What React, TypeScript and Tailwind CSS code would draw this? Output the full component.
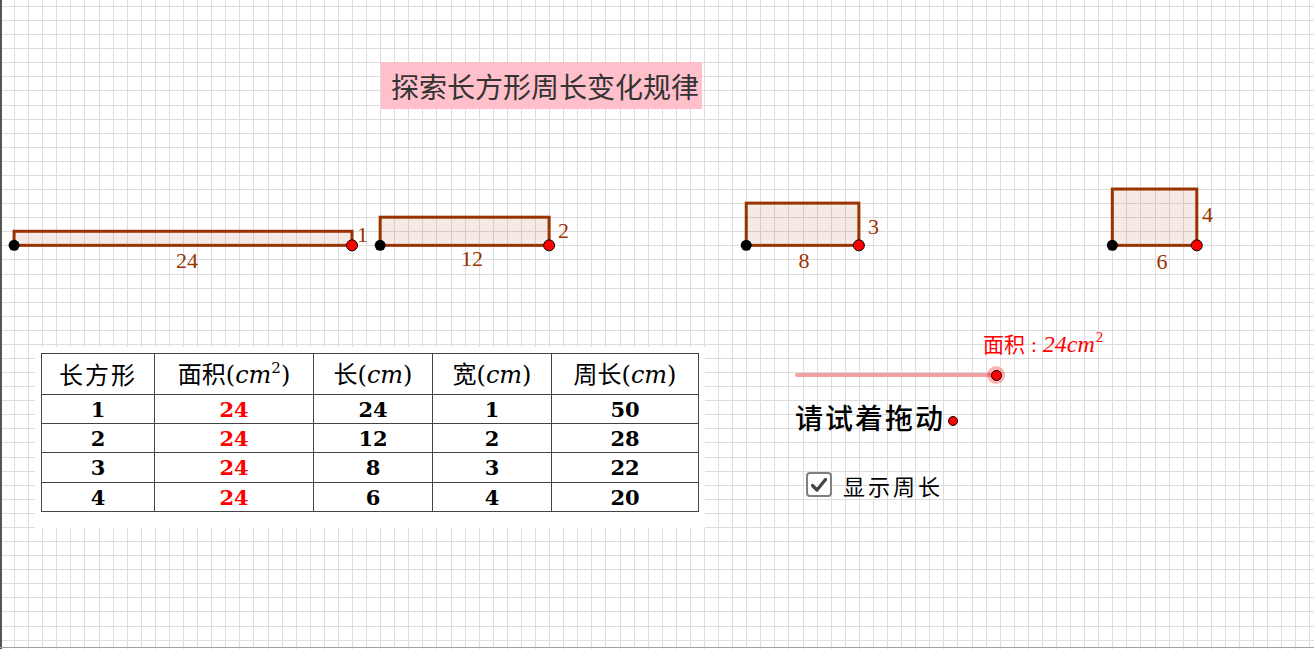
import React from 'react';

// GeoGebra-style canvas: 1 unit = 14.08px, grid origin offset 6px vertically
const U = 14.08;
const gx = (u: number) => u * U;
const gy = (v: number) => 6 + v * U;

const BROWN = '#993300';

const rects = [
  { u: 1, w: 24, h: 1 },
  { u: 27, w: 12, h: 2 },
  { u: 53, w: 8, h: 3 },
  { u: 79, w: 6, h: 4 },
];

const labels = [
  { t: '24', x: 187, y: 268, a: 'middle' },
  { t: '1', x: 357, y: 242, a: 'start' },
  { t: '12', x: 472, y: 266, a: 'middle' },
  { t: '2', x: 558, y: 238, a: 'start' },
  { t: '8', x: 804, y: 268, a: 'middle' },
  { t: '3', x: 868, y: 234, a: 'start' },
  { t: '6', x: 1162, y: 269, a: 'middle' },
  { t: '4', x: 1202, y: 222, a: 'start' },
];

const rows = [
  ['1', '24', '24', '1', '50'],
  ['2', '24', '12', '2', '28'],
  ['3', '24', '8', '3', '22'],
  ['4', '24', '6', '4', '20'],
];

const cjk = { fontFamily: '"Noto Sans CJK SC", "Noto Sans", sans-serif' };
const serif = { fontFamily: '"DejaVu Serif", "Liberation Serif", serif' };
const times = { fontFamily: '"Liberation Serif", serif' };

function Cm({ sup }: { sup?: boolean }) {
  return (
    <span style={serif}>
      (<i>cm</i>
      {sup && <sup className="text-[15px] -top-[10px]">2</sup>})
    </span>
  );
}

function Canvas() {
  const vLines = Array.from({ length: 94 }, (_, k) => Math.round(gx(k)) + 0.5);
  const hLines = Array.from({ length: 46 }, (_, k) => Math.round(gy(k)) + 0.5);
  return (
    <svg className="absolute inset-0" width={1314} height={649}>
      {vLines.map((x, i) => (
        <line key={'v' + i} x1={x} y1={0} x2={x} y2={649} stroke="#dddddd" strokeWidth={1} />
      ))}
      {hLines.map((y, i) => (
        <line key={'h' + i} x1={0} y1={y} x2={1314} y2={y} stroke="#dddddd" strokeWidth={1} />
      ))}

      {rects.map((r, i) => {
        const x = gx(r.u);
        const y0 = gy(17);
        const w = gx(r.w);
        const h = r.h * U;
        return (
          <g key={i}>
            <rect x={x} y={y0 - h} width={w} height={h} fill="rgba(153,51,0,0.1)" stroke={BROWN} strokeWidth={3} />
            <circle cx={x} cy={y0} r={5.5} fill="#000" />
            <circle cx={x + w} cy={y0} r={5.5} fill="#ff0000" stroke="#000" strokeWidth={1} />
          </g>
        );
      })}

      {labels.map((l, i) => (
        <text
          key={i}
          x={l.x}
          y={l.y}
          textAnchor={l.a as 'middle' | 'start'}
          fill={BROWN}
          fontSize={22}
          fontFamily='"Liberation Serif", serif'
        >
          {l.t}
        </text>
      ))}

      <circle cx={0.5} cy={30} r={1.5} fill="#2e8b57" />
    </svg>
  );
}

function ControlPanel() {
  return (
    <div className="absolute left-[795px] top-[330px] flex flex-col">
      {/* slider caption */}
      <div className="h-[26px] pl-[188px] text-[#ff0000] whitespace-nowrap leading-[26px]">
        <span className="text-[21px]" style={cjk}>面积</span>
        <span className="text-[21px] mx-[6px]" style={times}>:</span>
        <span className="italic text-[24px]" style={times}>24cm</span>
        <sup className="text-[15px] -top-[10px] ml-[1px]" style={times}>2</sup>
      </div>

      {/* slider */}
      <div className="relative mt-[17px] w-[201px] h-[4px] rounded-full bg-[#f4a0a0]">
        <div className="absolute right-[-9px] top-[-7px] w-[18px] h-[18px] rounded-full bg-[rgba(255,0,0,0.3)] flex items-center justify-center">
          <div className="w-[11px] h-[11px] rounded-full bg-[#ff0000] border border-black" />
        </div>
      </div>

      {/* drag hint */}
      <div className="mt-[26px] flex items-center gap-[3px]">
        <span className="text-[28px] leading-none text-black font-medium tracking-[2px] whitespace-nowrap" style={cjk}>
          请试着拖动
        </span>
        <span className="mt-[7px] w-[10px] h-[10px] rounded-full bg-[#ff0000] border border-black" />
      </div>

      {/* checkbox */}
      <div className="mt-[41px] pl-[11px] flex items-center gap-[11px]">
        <div className="w-[26px] h-[25px] rounded-[4px] border-2 border-[#808080] bg-white flex items-center justify-center">
          <svg width="18" height="16" viewBox="0 0 18 16">
            <path d="M2.5 8.5 L7 13 L15.5 2.5" fill="none" stroke="#444" strokeWidth={3.2} strokeLinecap="round" strokeLinejoin="round" />
          </svg>
        </div>
        <span className="text-[22px] leading-none text-black tracking-[3px]" style={cjk}>
          显示周长
        </span>
      </div>
    </div>
  );
}

export default function App() {
  return (
    <div className="relative w-[1314px] h-[649px] overflow-hidden bg-white">
      <Canvas />

      <div className="absolute inset-y-0 left-0 w-[2px] bg-[#555]" />
      <div className="absolute left-0 right-0 bottom-[1px] h-[1px] bg-[#a0a0a0]" />

      {/* title */}
      <div
        className="absolute left-[381px] top-[62px] w-[321px] h-[47px] bg-[#ffc0cb] pl-[10px] flex items-center text-[28px] text-[#333] leading-none"
        style={cjk}
      >
        探索长方形周长变化规律
      </div>

      {/* table */}
      <div className="absolute left-[35px] top-[347px] w-[670px] h-[181px] bg-white p-[6px]">
        <table className="border-collapse border border-[#444] text-black">
          <colgroup>
            <col className="w-[113px]" />
            <col className="w-[159px]" />
            <col className="w-[119px]" />
            <col className="w-[119px]" />
            <col className="w-[147px]" />
          </colgroup>
          <thead>
            <tr className="h-[41px] text-[24px] leading-none">
              <th className="border border-[#444] font-normal tracking-[2px]" style={cjk}>长方形</th>
              <th className="border border-[#444] font-normal" style={cjk}>面积<Cm sup /></th>
              <th className="border border-[#444] font-normal" style={cjk}>长<Cm /></th>
              <th className="border border-[#444] font-normal" style={cjk}>宽<Cm /></th>
              <th className="border border-[#444] font-normal" style={cjk}>周长<Cm /></th>
            </tr>
          </thead>
          <tbody>
            {rows.map((r, i) => (
              <tr key={i} className={i === 2 ? 'h-[30px]' : 'h-[29px]'}>
                {r.map((c, j) => (
                  <td
                    key={j}
                    className={
                      'border border-[#444] text-center font-bold text-[21px] leading-none ' +
                      (j === 1 ? 'text-[#ff0000]' : 'text-black')
                    }
                    style={serif}
                  >
                    {c}
                  </td>
                ))}
              </tr>
            ))}
          </tbody>
        </table>
      </div>

      <ControlPanel />
    </div>
  );
}
